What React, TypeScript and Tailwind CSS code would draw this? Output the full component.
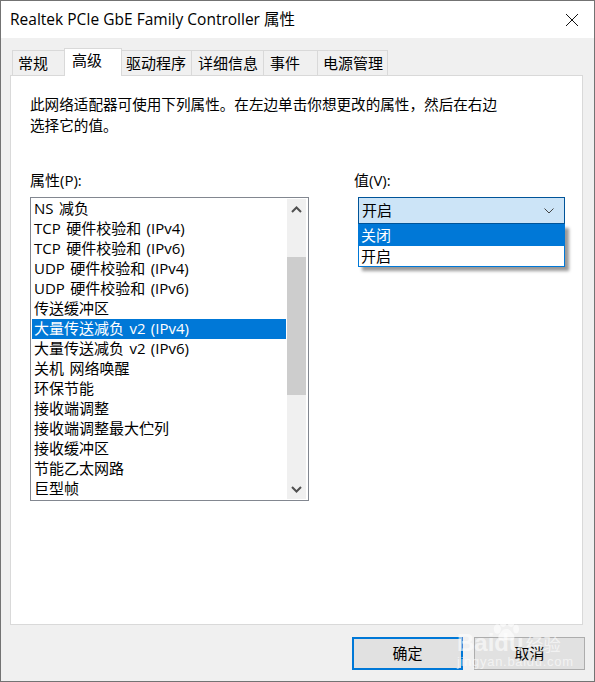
import React from "react";

const FONT = "font-['Open_Sans','Noto_Sans_CJK_SC',sans-serif]";

const tabs = [
  { label: "常规", w: "w-[53px] pl-[5px]" },
  { label: "高级", w: "w-[58px] pl-[7px]", active: true },
  { label: "驱动程序", w: "w-[71px] pl-[4px]" },
  { label: "详细信息", w: "w-[73px] pl-[6px]" },
  { label: "事件", w: "w-[55px] pl-[6px]" },
  { label: "电源管理", w: "w-[71px] pl-[5px]" },
];

const props = [
  "NS 减负",
  "TCP 硬件校验和 (IPv4)",
  "TCP 硬件校验和 (IPv6)",
  "UDP 硬件校验和 (IPv4)",
  "UDP 硬件校验和 (IPv6)",
  "传送缓冲区",
  "大量传送减负 v2 (IPv4)",
  "大量传送减负 v2 (IPv6)",
  "关机 网络唤醒",
  "环保节能",
  "接收端调整",
  "接收端调整最大伫列",
  "接收缓冲区",
  "节能乙太网路",
  "巨型帧",
];

const Chevron = ({ up, color = "#505050" }: { up?: boolean; color?: string }) => (
  <svg width="11" height="7" viewBox="0 0 11 7" fill="none">
    <path
      d={up ? "M1 6L5.5 1.5L10 6" : "M1 1L5.5 5.5L10 1"}
      stroke={color}
      strokeWidth="2"
    />
  </svg>
);

const App: React.FC = () => {
  return (
    <div
      className={`relative w-[595px] h-[682px] flex flex-col overflow-hidden bg-[#f0f0f0] border border-[#737373] text-[15px] text-black ${FONT}`}
    >
      {/* Title bar */}
      <div className="h-[37px] shrink-0 bg-white flex items-center justify-between pl-[9px] pr-[15px]">
        <span className="text-[15.5px]">Realtek PCIe GbE Family Controller 属性</span>
        <svg width="14" height="14" viewBox="0 0 14 14" fill="none">
          <path d="M1 1L13 13M13 1L1 13" stroke="#111" strokeWidth="1" />
        </svg>
      </div>

      {/* Tabs */}
      <div className="h-[37px] shrink-0 flex items-end pl-[12px] relative z-10">
        {tabs.map((t) =>
          t.active ? (
            <div
              key={t.label}
              className={`${t.w} -ml-px h-[28px] mb-[-1px] pb-[4px] bg-white border border-b-0 border-[#d9d9d9] flex items-center relative z-10`}
            >
              {t.label}
            </div>
          ) : (
            <div
              key={t.label}
              className={`${t.w} h-[25px] -ml-px bg-[#f0f0f0] border border-b-0 border-[#d9d9d9] flex items-center whitespace-nowrap`}
            >
              {t.label}
            </div>
          )
        )}
      </div>

      {/* Panel */}
      <div className="ml-[9px] w-[573px] h-[550px] shrink-0 bg-white border border-[#d9d9d9] pl-[19px] pt-[18px] relative">
        <p className="leading-[21px] text-[14.6px] whitespace-nowrap">
          此网络适配器可使用下列属性。在左边单击你想更改的属性，然后在右边
          <br />
          选择它的值。
        </p>

        <div className="flex mt-[35px]">
          <div className="w-[279px]">
            <div className="h-[20px] leading-[18px] mb-[6px]">属性(P):</div>
            <div className="h-[304px] border border-[#828790] p-px flex">
              <ul className="w-[254px] [word-spacing:1.5px]">
                {props.map((p, i) => (
                  <li
                    key={p}
                    className={`h-[20px] leading-[19px] pl-[2px] whitespace-nowrap ${
                      i === 6 ? "bg-[#0078d7] text-white" : ""
                    }`}
                  >
                    {p}
                  </li>
                ))}
              </ul>
              <div className="w-[19px] ml-[1px] bg-[#f0f0f0] flex flex-col">
                <div className="h-[20px] flex items-center justify-center">
                  <Chevron up />
                </div>
                <div className="h-[38px]" />
                <div className="h-[138px] bg-[#cdcdcd]" />
                <div className="flex-1" />
                <div className="h-[20px] flex items-center justify-center">
                  <Chevron />
                </div>
              </div>
            </div>
          </div>

          <div className="ml-[49px] w-[207px] relative">
            <div className="h-[20px] leading-[18px] mb-[6px] -ml-[4px]">值(V):</div>
            <div className="h-[27px] bg-[#cce4f7] border border-[#005499] flex items-center justify-between pl-[3px] pr-[10px]">
              <span>开启</span>
              <svg width="10" height="6" viewBox="0 0 10 6" fill="none">
                <path d="M0.5 0.5L5 5L9.5 0.5" stroke="#444" strokeWidth="1" />
              </svg>
            </div>
            {/* Open dropdown */}
            <div className="absolute left-0 top-[53px] w-[207px] h-[43px] bg-white border border-[#0078d7] shadow-[4px_4px_3px_rgba(0,0,0,0.4)]">
              <div className="h-[21px] leading-[21px] pl-[2px] bg-[#0078d7] text-white">关闭</div>
              <div className="h-[20px] leading-[20px] pl-[2px]">开启</div>
            </div>
          </div>
        </div>
      </div>

      {/* Buttons */}
      <div className="flex gap-[11px] pl-[351px] mt-[12px]">
        <button className="w-[111px] h-[33px] bg-[#e1e1e1] border-2 border-[#0078d7]">确定</button>
        <button className="w-[111px] h-[33px] bg-[#e1e1e1] border border-[#adadad]">取消</button>
      </div>

      {/* Baidu watermark */}
      <svg
        className="absolute left-[492px] top-[617px] text-white/60 pointer-events-none"
        width="26"
        height="25"
        viewBox="0 0 36 34"
        fill="currentColor"
      >
        <ellipse cx="6" cy="15" rx="5" ry="6.5" />
        <ellipse cx="14" cy="6" rx="4.5" ry="6" />
        <ellipse cx="25" cy="6" rx="4.5" ry="6" />
        <ellipse cx="32" cy="15" rx="4" ry="6" />
        <path d="M18 15c-5 0-6 4-9 7-3 3-2 9 3 9 3 0 4-1 6-1s4 1 7 1c5 0 6-6 3-9-3-3-4-7-10-7z" />
      </svg>
      <div className="absolute left-[456px] top-[628px] text-[24px] leading-[28px] font-bold text-white/60 pointer-events-none font-['Liberation_Sans',sans-serif] whitespace-nowrap">
        Baidu
        <span className={`ml-[2px] text-[17.5px] font-normal ${FONT}`}>经验</span>
      </div>
      <div className="absolute left-[456px] top-[653px] text-[13px] leading-[16px] tracking-[0.7px] text-white/60 pointer-events-none font-['Liberation_Sans',sans-serif] whitespace-nowrap">
        jingyan.baidu.com
      </div>
    </div>
  );
};

export default App;
